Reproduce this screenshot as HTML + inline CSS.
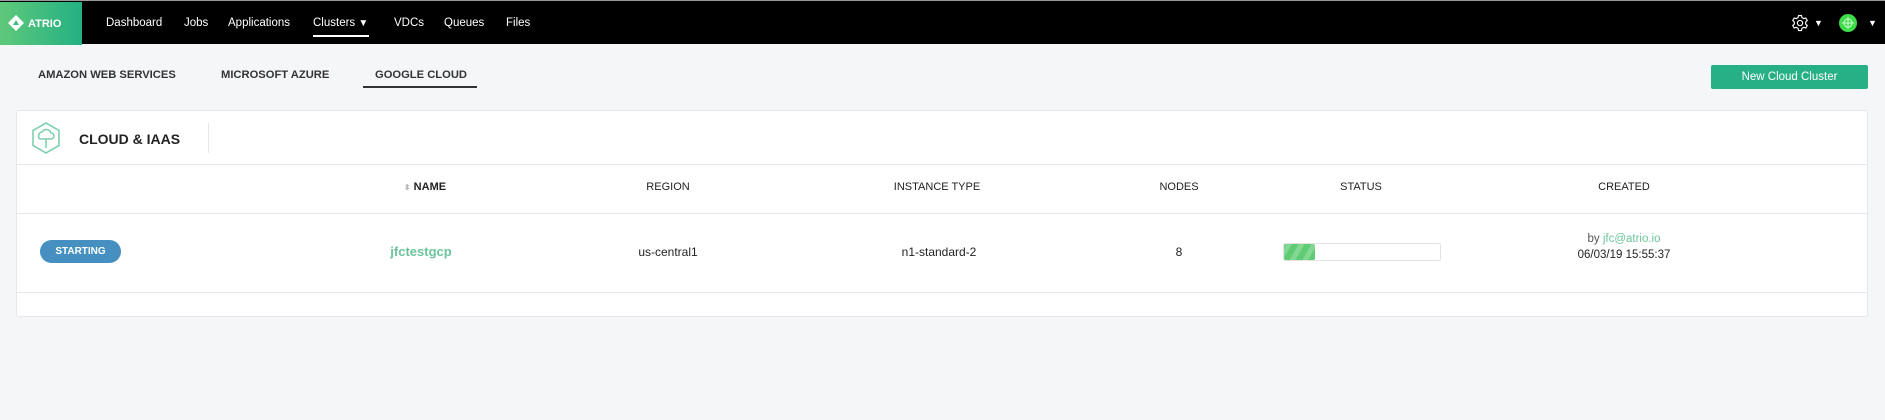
<!DOCTYPE html>
<html><head><meta charset="utf-8"><style>
*{margin:0;padding:0;box-sizing:border-box}
body{width:1885px;height:420px;background:#f5f6f8;font-family:"Liberation Sans",sans-serif;position:relative;overflow:hidden;color:#222}
.a{position:absolute;white-space:nowrap}
.nav{position:absolute;left:0;top:0;width:1885px;height:44px;background:#000;border-top:1px solid #999}
.logo{position:absolute;left:0;top:1px;width:82px;height:43px;background:linear-gradient(90deg,#5fc97a,#23b083)}
.nl{color:#fff;font-size:11.5px;top:16px}
.tab{font-size:11.2px;font-weight:bold;color:#333;top:69px}
.card{position:absolute;left:16px;top:110px;width:1852px;height:207px;background:#fff;border:1px solid #e6e7ea;border-radius:3px}
.hl{position:absolute;left:0;width:100%;height:1px;background:#e6e7ea}
.th{font-size:11px;color:#222;top:181px;transform:translateX(-50%)}
.td{font-size:12px;color:#222;top:245px;transform:translateX(-50%)}
</style></head><body>
<div class="nav">
 <div class="logo">
  <svg class="a" style="left:8px;top:13px" width="16" height="16" viewBox="0 0 16 16"><path d="M8 0L16 8L8 16L0 8Z" fill="#fff"/><path d="M8 5L11 10H5Z" fill="#3bbd80"/></svg>
  <span class="a" style="left:28px;top:16px;color:#fff;font-size:11px;font-weight:bold">ATRIO</span>
 </div>
 <span class="a nl" style="left:106px">Dashboard</span>
 <span class="a nl" style="left:184px">Jobs</span>
 <span class="a nl" style="left:228px">Applications</span>
 <span class="a nl" style="left:313px">Clusters <span style="font-size:10px">▼</span></span>
 <div class="a" style="left:313px;top:34px;width:56px;height:2px;background:#fff"></div>
 <span class="a nl" style="left:394px">VDCs</span>
 <span class="a nl" style="left:444px">Queues</span>
 <span class="a nl" style="left:506px">Files</span>
 <svg class="a" style="left:1791px;top:13px" width="18" height="18" viewBox="0 0 24 24" fill="none" stroke="#fff" stroke-width="1.5"><circle cx="12" cy="12" r="3.5"/><path d="M10 2h4l.6 2.8 2.4 1.4 2.7-.9 2 3.4-2.1 1.9v2.8l2.1 1.9-2 3.4-2.7-.9-2.4 1.4L14 22h-4l-.6-2.8-2.4-1.4-2.7.9-2-3.4 2.1-1.9v-2.8L2.3 8.7l2-3.4 2.7.9 2.4-1.4z"/></svg>
 <span class="a" style="left:1814px;top:17px;color:#fff;font-size:9px">▼</span>
 <div class="a" style="left:1839px;top:13px;width:18px;height:18px;border-radius:50%;background:#3fdc4a"><svg width="18" height="18" viewBox="0 0 18 18" stroke="#b8f5b8" stroke-width="1.2" fill="none"><circle cx="9" cy="9" r="4"/><path d="M9 3v12M3 9h12"/></svg></div>
 <span class="a" style="left:1868px;top:17px;color:#fff;font-size:9px">▼</span>
</div>
<span class="a tab" style="left:38px">AMAZON WEB SERVICES</span>
<span class="a tab" style="left:221px">MICROSOFT AZURE</span>
<span class="a tab" style="left:375px">GOOGLE CLOUD</span>
<div class="a" style="left:363px;top:86px;width:114px;height:2px;background:#333"></div>
<div class="a" style="left:1711px;top:65px;width:157px;height:24px;background:#27b086;border-radius:2px;color:#fff;font-size:11.5px;text-align:center;line-height:25px">New Cloud Cluster</div>
<div class="card">
 <svg class="a" style="left:12px;top:10px" width="34" height="34" viewBox="0 0 34 34" fill="none" stroke="#7fd0ae" stroke-width="1.6"><path d="M17 2L30 9.5V24.5L17 32L4 24.5V9.5Z"/><path d="M11 18a4 4 0 0 1 2-7 5 5 0 0 1 9 1 3 3 0 0 1 0 6Z"/><path d="M17 18v9"/></svg>
 <span class="a" style="left:62px;top:20px;font-size:14px;font-weight:bold;color:#222">CLOUD &amp; IAAS</span>
 <div class="a" style="left:191px;top:12px;width:1px;height:30px;background:#e6e7ea"></div>
 <div class="hl" style="top:53px"></div>
 <div class="hl" style="top:102px"></div>
 <div class="hl" style="top:181px"></div>
</div>
<span class="a th" style="left:425px;font-weight:bold"><span style="color:#bbb;font-size:8px">⬍</span> NAME</span>
<span class="a th" style="left:668px">REGION</span>
<span class="a th" style="left:937px">INSTANCE TYPE</span>
<span class="a th" style="left:1179px">NODES</span>
<span class="a th" style="left:1361px">STATUS</span>
<span class="a th" style="left:1624px">CREATED</span>
<div class="a" style="left:40px;top:240px;width:81px;height:23px;border-radius:12px;background:#4590c1;color:#fff;font-size:10px;font-weight:bold;text-align:center;line-height:24px">STARTING</div>
<span class="a td" style="left:421px;color:#6cc49a;font-weight:bold;font-size:13px;top:244px">jfctestgcp</span>
<span class="a td" style="left:668px">us-central1</span>
<span class="a td" style="left:939px">n1-standard-2</span>
<span class="a td" style="left:1179px">8</span>
<div class="a" style="left:1283px;top:243px;width:158px;height:18px;border:1px solid #e3e3e3;border-radius:2px"><div style="width:31px;height:16px;border-radius:2px;background:repeating-linear-gradient(-60deg,#5fcb74 0 6px,#82d893 6px 11px)"></div></div>
<span class="a td" style="left:1624px;top:233px;font-size:11.5px;color:#555">by <span style="color:#6cc49a">jfc@atrio.io</span></span>
<span class="a td" style="left:1624px;top:249px;font-size:11.5px">06/03/19 15:55:37</span>
</body></html>
